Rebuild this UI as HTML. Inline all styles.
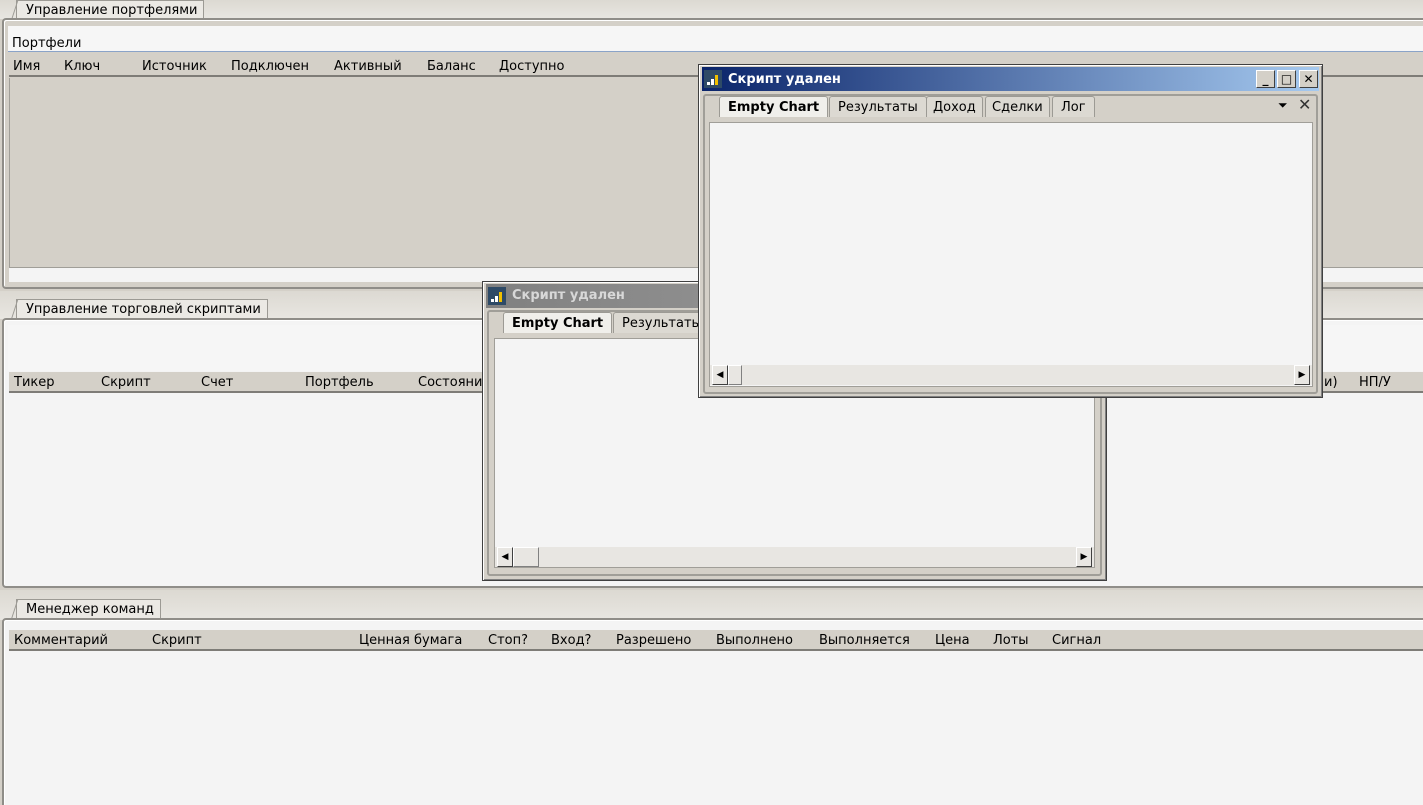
<!DOCTYPE html>
<html><head><meta charset="utf-8"><style>
*{margin:0;padding:0;box-sizing:border-box}
html,body{width:1423px;height:805px;overflow:hidden}
body{background:#d4d0c8;font-family:Tahoma,"DejaVu Sans",sans-serif;font-size:13px;color:#000;position:relative}
.a{position:absolute}
.strip{background:linear-gradient(#dcd9d2,#e8e6e1)}
.tab{position:absolute;background:#ebe9e4;border:1px solid #9c9a94;border-bottom:none;padding:2px 6px 0 9px;height:19px;white-space:nowrap;font-size:13px}
.tab:before{content:"";position:absolute;left:-6px;top:0;width:8px;height:19px;border-left:1px solid #9c9a94;transform:skewX(-18deg);transform-origin:bottom}
.frame{position:absolute;border:2px solid #8f8d88;border-radius:4px;box-shadow:inset 1px 1px 0 #fff}
.hdr{position:absolute;height:21px;background:#d4d0c8;border-bottom:2px solid #7e7c77;white-space:nowrap}
.hdr span{position:absolute;top:3px}
.white{background:#f4f4f4}
.win{position:absolute;background:#d4d0c8;border:1px solid #404040;box-shadow:inset 1px 1px 0 #fff,inset -1px -1px 0 #808080}
.title{position:absolute;left:3px;right:3px;top:2px;height:24px;color:#fff;font-weight:bold;font-size:13px}
.ico{position:absolute;left:2px;top:3px;width:18px;height:18px;background:#2e4a66}
.ico i{position:absolute;bottom:3px;width:3px;background:#fff}
.btn{position:absolute;top:3px;width:19px;height:18px;background:#d4d0c8;border:1px solid;border-color:#fff #404040 #404040 #fff;color:#000;font-size:12px;text-align:center;line-height:16px}
.wt{position:absolute;top:0;height:21px;padding:3px 8px 0 8px;background:#dcd9d2;border:1px solid #9c9a94;border-bottom:none;border-radius:3px 3px 0 0;font-size:13px;white-space:nowrap}
.sb{position:absolute;height:20px;background:#e8e6e2}
.sbtn{position:absolute;top:0;width:16px;height:20px;background:#e8e6e2;border:1px solid;border-color:#fff #404040 #404040 #fff;font-size:9px;line-height:18px;text-align:center}
</style></head><body>

<div class="a strip" style="left:0;top:0;width:1423px;height:19px"></div>
<div class="tab" style="left:16px;top:0px">Управление портфелями</div>
<div class="frame" style="left:2px;top:18px;width:1430px;height:271px;background:#d4d0c8"></div>
<div class="a" style="left:8px;top:26px;width:1420px;height:26px;background:#f6f6f6;border-bottom:1px solid #8aa3c8"></div>
<div class="a" style="left:12px;top:36px">Портфели</div>
<div class="hdr" style="left:9px;top:56px;width:1420px"><span style="left:4px">Имя</span><span style="left:55px">Ключ</span><span style="left:133px">Источник</span><span style="left:222px">Подключен</span><span style="left:325px">Активный</span><span style="left:418px">Баланс</span><span style="left:490px">Доступно</span></div>
<div class="a" style="left:9px;top:78px;width:1420px;height:189px;background:#d4d0c8;border-left:1px solid #a09e98"></div>
<div class="a" style="left:9px;top:267px;width:1420px;height:15px;background:#f4f4f4;border-top:1px solid #a09e98"></div>

<div class="a strip" style="left:0;top:291px;width:1423px;height:28px"></div>
<div class="tab" style="left:16px;top:299px">Управление торговлей скриптами</div>
<div class="frame" style="left:2px;top:318px;width:1430px;height:270px;background:#f4f4f4"></div>
<div class="a" style="left:8px;top:325px;width:1420px;height:46px;background:#f6f6f6"></div>
<div class="hdr" style="left:9px;top:372px;width:1420px"><span style="left:5px">Тикер</span><span style="left:92px">Скрипт</span><span style="left:192px">Счет</span><span style="left:296px">Портфель</span><span style="left:409px">Состояни</span><span style="left:1315px">и)</span><span style="left:1350px">НП/У</span></div>
<div class="a" style="left:9px;top:394px;width:1420px;height:186px;background:#f4f4f4"></div>

<div class="a strip" style="left:0;top:590px;width:1423px;height:30px"></div>
<div class="tab" style="left:16px;top:599px">Менеджер команд</div>
<div class="frame" style="left:2px;top:618px;width:1430px;height:200px;background:#f4f4f4"></div>
<div class="hdr" style="left:9px;top:630px;width:1420px"><span style="left:5px">Комментарий</span><span style="left:143px">Скрипт</span><span style="left:350px">Ценная бумага</span><span style="left:479px">Стоп?</span><span style="left:542px">Вход?</span><span style="left:607px">Разрешено</span><span style="left:707px">Выполнено</span><span style="left:810px">Выполняется</span><span style="left:926px">Цена</span><span style="left:984px">Лоты</span><span style="left:1043px">Сигнал</span></div>

<div class="win" style="left:482px;top:281px;width:625px;height:300px">
 <div class="title" style="background:linear-gradient(90deg,#808080,#a8a8a8);color:#d8d8d8">
  <div class="ico"><i style="left:3px;height:3px"></i><i style="left:7px;height:6px"></i><i style="left:11px;height:10px;background:#f0c000"></i></div>
  <span style="position:absolute;left:26px;top:4px">Скрипт удален</span></div>
 <div class="a" style="left:4px;top:28px;width:615px;height:266px;border:2px solid #a09e98;border-radius:3px"></div>
 <div class="wt" style="left:20px;top:30px;background:#f0efeb;font-weight:bold">Empty Chart</div>
 <div class="wt" style="left:130px;top:30px;width:90px">Результаты</div>
 <div class="a white" style="left:11px;top:56px;width:601px;height:230px;border:1px solid #a09e98"></div>
 <div class="sb" style="left:12px;top:265px;width:599px">
  <div class="sbtn" style="left:2px">◀</div><div class="a" style="left:18px;top:0;width:26px;height:20px;border:1px solid;border-color:#fff #808080 #808080 #fff"></div>
  <div class="sbtn" style="right:2px">▶</div></div>
</div>

<div class="win" style="left:698px;top:64px;width:625px;height:334px">
 <div class="title" style="background:linear-gradient(90deg,#0a246a,#a6caf0)">
  <div class="ico"><i style="left:3px;height:3px"></i><i style="left:7px;height:6px"></i><i style="left:11px;height:10px;background:#f0c000"></i></div>
  <span style="position:absolute;left:26px;top:5px">Скрипт удален</span>
  <div class="btn" style="right:44px">_</div><div class="btn" style="right:23px">□</div><div class="btn" style="right:1px;font-weight:bold">✕</div></div>
 <div class="a" style="left:4px;top:29px;width:615px;height:300px;border:2px solid #a09e98;border-radius:3px"></div>
 <div class="wt" style="left:20px;top:31px;background:#f0efeb;font-weight:bold">Empty Chart</div>
 <div class="wt" style="left:130px;top:31px">Результаты</div>
 <div class="wt" style="left:227px;top:31px;padding:3px 6px 0">Доход</div>
 <div class="wt" style="left:286px;top:31px;padding:3px 6px 0">Сделки</div>
 <div class="wt" style="left:353px;top:31px;padding:3px 8px 0">Лог</div>
 <div class="a" style="left:579px;top:33px;font-size:12px">⏷</div>
 <div class="a" style="left:599px;top:30px;font-size:16px;color:#333">✕</div>
 <div class="a white" style="left:10px;top:57px;width:604px;height:265px;border:1px solid #a09e98"></div>
 <div class="sb" style="left:11px;top:300px;width:602px">
  <div class="sbtn" style="left:2px">◀</div><div class="a" style="left:18px;top:0;width:14px;height:20px;border:1px solid;border-color:#fff #808080 #808080 #fff"></div>
  <div class="sbtn" style="right:2px">▶</div></div>
</div>
</body></html>
